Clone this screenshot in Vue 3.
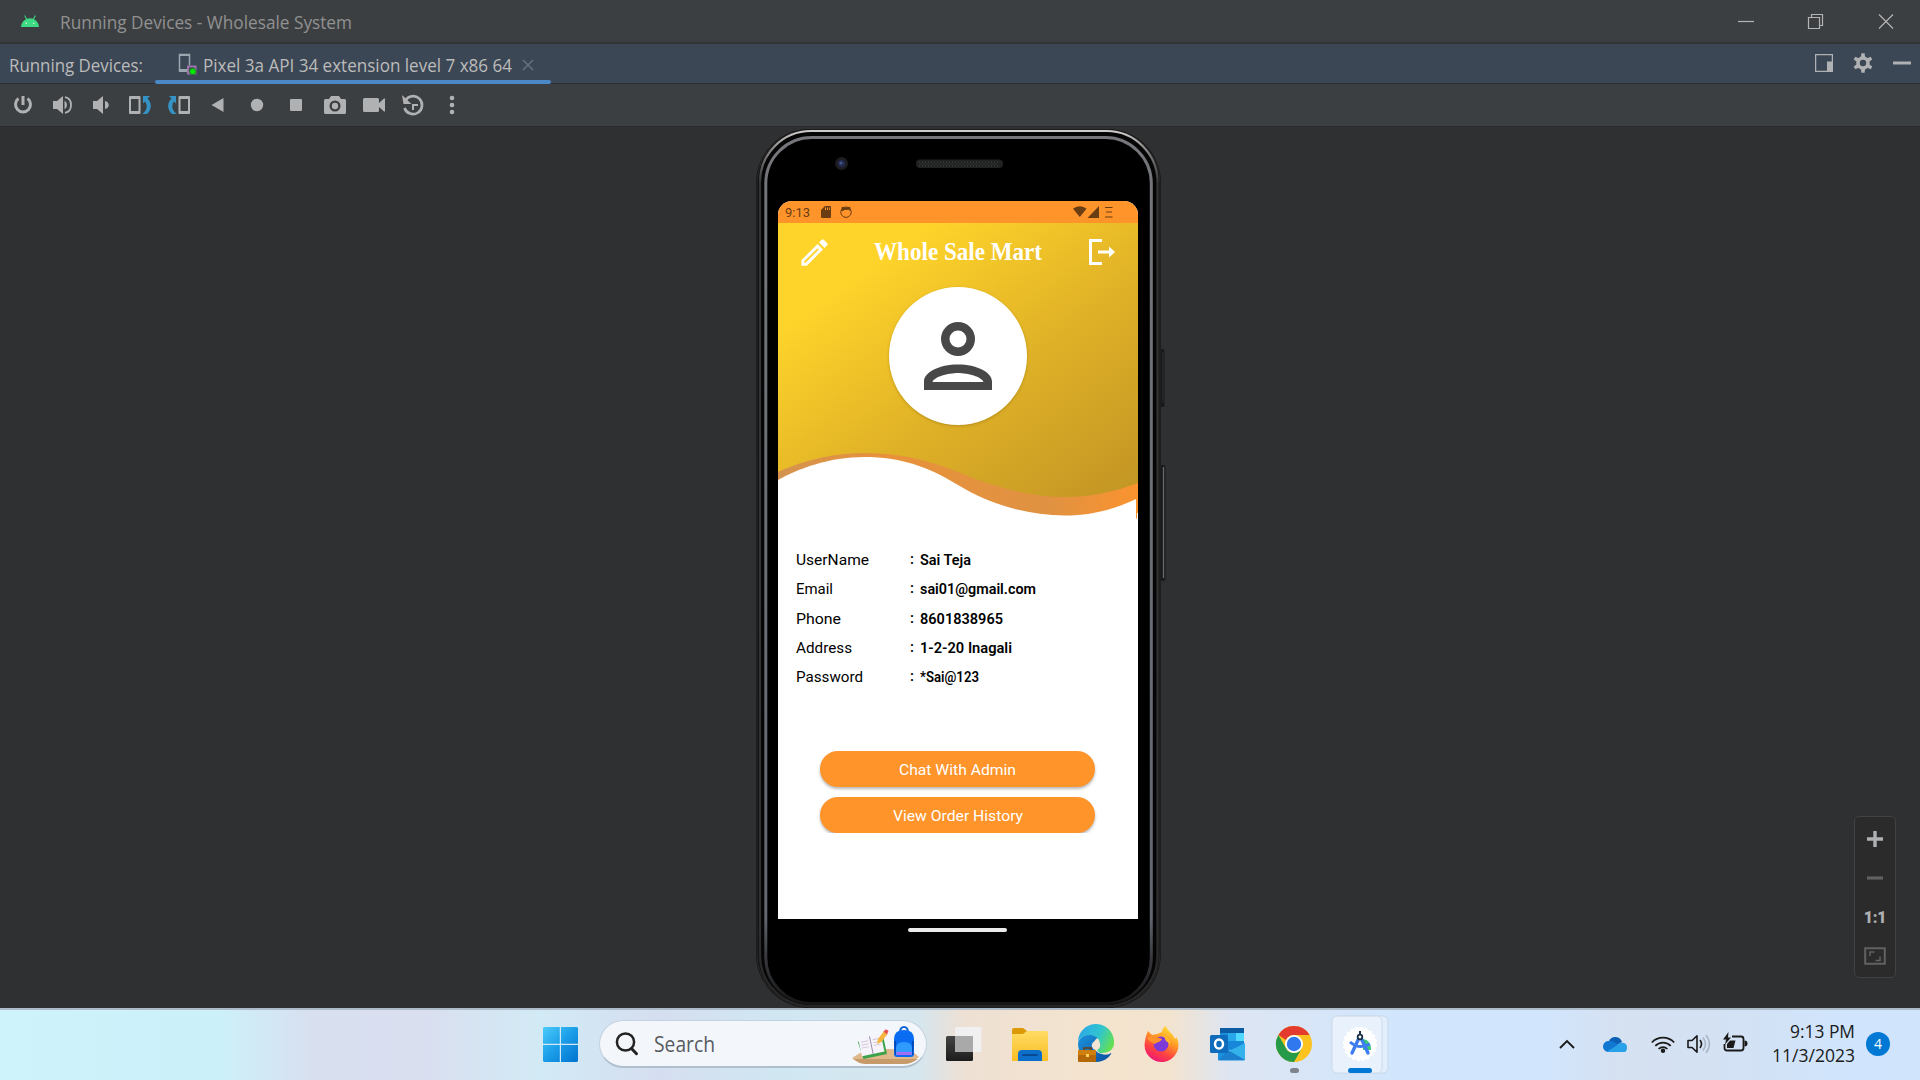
<script setup>
import { h } from 'vue'

// Single-line text drawn to an exact advance width.
const Label = (props) =>
  h('svg', { class: 'label', width: props.w, height: props.size }, [
    h(
      'text',
      {
        x: 0,
        y: props.size * 0.85,
        'font-size': props.size,
        textLength: props.w,
        lengthAdjust: 'spacingAndGlyphs',
        fill: 'currentColor',
      },
      props.text,
    ),
  ])
Label.props = ['text', 'w', 'size']

const rows = [
  { label: 'UserName', lw: 73, value: 'Sai Teja', vw: 51 },
  { label: 'Email', lw: 37, value: 'sai01@gmail.com', vw: 116 },
  { label: 'Phone', lw: 45, value: '8601838965', vw: 83 },
  { label: 'Address', lw: 56, value: '1-2-20 Inagali', vw: 92 },
  { label: 'Password', lw: 67, value: '*Sai@123', vw: 59 },
]
const actions = [
  { text: 'Chat With Admin', w: 117 },
  { text: 'View Order History', w: 130 },
]
</script>

<template>
  <div class="desktop">
    <header class="titlebar">
      <svg class="android" width="18" height="12" viewBox="0 0 18 12">
        <path d="M0 12C.3 8.200 2.200 5.600 5 4.300L3.200.8l.8-.5 2 3.500a9 9 0 0 1 6 0L14 .3l.8.5L13 4.300c2.800 1.300 4.700 3.900 5 7.700z" fill="#3ddc84" />
        <circle cx="5.200" cy="8.300" r=".8" fill="#d8f7e5" /><circle cx="12.800" cy="8.300" r=".8" fill="#d8f7e5" />
      </svg>
      <Label class="win-title" text="Running Devices - Wholesale System" :w="292" :size="18.5" />
      <div class="win-buttons">
        <svg width="18" height="18" viewBox="0 0 18 18"><path d="M1 9.500h16" /></svg>
        <svg width="18" height="18" viewBox="0 0 18 18"><path d="M1.500 5.500h11v11h-11zM4.500 5.500v-3h11v11h-3" /></svg>
        <svg width="18" height="18" viewBox="0 0 18 18"><path d="M2 2.500l14 14M16 2.500l-14 14" /></svg>
      </div>
    </header>

    <nav class="tabs">
      <Label class="tabs-name" text="Running Devices:" :w="134" :size="18.5" />
      <div class="tab">
        <svg class="tab-icon" width="20" height="22" viewBox="0 0 20 22">
          <path d="M9 18H1.500V1.500h10v11" fill="none" stroke="#9aa7b0" stroke-width="1.500" />
          <path d="M1 1h11v2H1zM1 16h8v3H1z" fill="#9aa7b0" />
          <path d="M10 13.500h7.500v7H10z" fill="none" stroke="#9876aa" stroke-width="2" />
          <circle cx="14.800" cy="18.500" r="3.200" fill="#00e800" stroke="#254a2c" stroke-width=".6" />
        </svg>
        <Label text="Pixel 3a API 34 extension level 7 x86 64" :w="309" :size="18.5" />
        <svg class="tab-close" width="12" height="12" viewBox="0 0 12 12"><path d="M1 1l10 10M11 1L1 11" stroke="#6b747e" stroke-width="1.300" /></svg>
      </div>
      <div class="tab-tools">
        <svg width="18" height="18" viewBox="0 0 18 18"><path d="M.6.6h16.800v16.800H.6z" fill="none" stroke="#afb1b3" stroke-width="1.300" /><path d="M12 7.500h6V18h-6z" fill="#afb1b3" /></svg>
        <svg width="20" height="20" viewBox="0 0 20 20">
          <g fill="#afb1b3"><path fill-rule="evenodd" d="M10 3.200a6.800 6.800 0 1 0 0 13.600 6.800 6.800 0 0 0 0-13.600zm0 3.600a3.200 3.200 0 1 1 0 6.400 3.200 3.200 0 0 1 0-6.400z" />
            <path v-for="a in 6" :key="a" d="M7.900 4.500L8.400.2h3.200l.5 4.300z" :transform="`rotate(${a * 60} 10 10)`" /></g>
        </svg>
        <svg width="18" height="18" viewBox="0 0 18 18"><path d="M0 7.500h18v3H0z" fill="#afb1b3" /></svg>
      </div>
    </nav>

    <div class="toolbar">
      <svg viewBox="0 0 24 24"><path d="M7.500 5.500a7.500 7.500 0 1 0 9 0" fill="none" stroke="#afb1b3" stroke-width="3" /><path d="M10.500 3h3v9h-3z" /></svg>
      <svg viewBox="0 0 24 24"><path d="M3 8h4l6-5v18l-6-5H3zM14.500 8c3.300 1 3.300 7 0 8z" /><path d="M15 4.200c8 1.500 8 14 0 15.600" fill="none" stroke="#afb1b3" stroke-width="1.800" /></svg>
      <svg viewBox="0 0 24 24"><path d="M4 8h4l6-5v18l-6-5H4zM16 8c5 1 5 7 0 8z" /></svg>
      <svg viewBox="0 0 24 24"><path fill-rule="evenodd" d="M2 3h9.500a1 1 0 0 1 1 1v16a1 1 0 0 1-1 1H2a1 1 0 0 1-1-1V4a1 1 0 0 1 1-1zm1 3v12h7.500V6z" /><path d="M15 3h7l-2.500 2.400c4.500 4.200 4.500 11-.5 15.600h-5c5-3.500 6-8.500 3-12.600l-2 2z" fill="#3592c4" /></svg>
      <svg viewBox="0 0 24 24"><path fill-rule="evenodd" d="M12.500 3H22a1 1 0 0 1 1 1v16a1 1 0 0 1-1 1h-9.500a1 1 0 0 1-1-1V4a1 1 0 0 1 1-1zm1 3v12H21V6z" /><path d="M9 3H2l2.500 2.400C0 9.600 0 16.400 5 21h5c-5-3.500-6-8.500-3-12.600l2 2z" fill="#3592c4" /></svg>
      <svg viewBox="0 0 24 24"><path d="M5.500 12l12-7v14z" /></svg>
      <svg viewBox="0 0 24 24"><circle cx="12" cy="12" r="6.200" /></svg>
      <svg viewBox="0 0 24 24"><rect x="6" y="6" width="12" height="12" rx="1" /></svg>
      <svg viewBox="0 0 24 24"><path fill-rule="evenodd" d="M8 3h8l2 3h3.500A1.500 1.500 0 0 1 23 7.500v12a1.500 1.500 0 0 1-1.500 1.500h-19A1.500 1.500 0 0 1 1 19.500v-12A1.500 1.500 0 0 1 2.500 6H6zm4 4.500a5.500 5.500 0 1 0 0 11 5.500 5.500 0 0 0 0-11z" /><circle cx="12" cy="13" r="3.200" /></svg>
      <svg viewBox="0 0 24 24"><path d="M3 5h12.500A1.500 1.500 0 0 1 17 6.500V10l5-4.500h1v13h-1L17 14v3.500a1.500 1.500 0 0 1-1.500 1.500h-13A1.500 1.500 0 0 1 1 17.500v-11A1.500 1.500 0 0 1 2.500 5z" /></svg>
      <svg viewBox="0 0 24 24"><path d="M4.300 7.500a9 9 0 1 1-.8 7.500" fill="none" stroke="#afb1b3" stroke-width="2.600" /><path d="M1 2l1.500 9h8z" /><path d="M12 17v-5h5" fill="none" stroke="#afb1b3" stroke-width="2" /></svg>
      <svg viewBox="0 0 24 24"><circle cx="12" cy="5" r="2.300" /><circle cx="12" cy="12" r="2.300" /><circle cx="12" cy="19" r="2.300" /></svg>
    </div>

    <main class="canvas">
      <div class="phone">
        <svg class="shell" width="414" height="880" viewBox="0 0 414 880">
          <defs>
            <linearGradient id="rim" x1="0" y1="0" x2="0" y2="1">
              <stop offset="0" stop-color="#d0cccb" /><stop offset=".02" stop-color="#8a8888" /><stop offset=".06" stop-color="#343434" /><stop offset=".9" stop-color="#303030" /><stop offset="1" stop-color="#262626" />
            </linearGradient>
            <linearGradient id="bezelL" x1="0" y1="0" x2="0" y2="1">
              <stop offset="0" stop-color="#74767b" /><stop offset=".9" stop-color="#626770" /><stop offset=".95" stop-color="#34363a" /><stop offset="1" stop-color="#161617" />
            </linearGradient>
          </defs>
          <rect x="402" y="221" width="6.500" height="58" rx="2" fill="#18191a" /><path d="M407 224v51" stroke="#303132" />
          <rect x="404" y="337" width="5.500" height="116" rx="2" fill="#1a1a1b" /><path d="M407.500 339v111" stroke="#68696b" stroke-width="1.400" />
          <rect x="0" y="1" width="405" height="879" rx="54" fill="#131313" />
          <rect x="1" y="2" width="403" height="877" rx="53" fill="none" stroke="#2a2a2a" />
          <rect x="4" y="3" width="397.500" height="875" rx="51" fill="#050505" stroke="url(#rim)" stroke-width="2.200" />
          <rect x="9.800" y="9.500" width="385.500" height="866" rx="46" fill="#000" stroke="url(#bezelL)" stroke-width="3" />
          <rect x="13" y="12" width="379" height="862" rx="44" fill="#000" />
          <circle cx="85.500" cy="35.500" r="6.500" fill="#1d1d21" /><circle cx="85.500" cy="35.500" r="3.500" fill="#242b51" /><circle cx="85" cy="35" r="1.500" fill="#455585" />
          <rect x="160" y="31.500" width="87" height="8.500" rx="4" fill="#202222" />
          <path d="M163 34h81M164.500 36h78M163 38h81" stroke="#464848" stroke-dasharray="1 2" />
        </svg>

        <section class="screen">
          <div class="status">
            <Label class="clock" text="9:13" :w="25" :size="13" />
            <svg class="sd" width="10" height="12" viewBox="0 0 10 12"><path fill-rule="evenodd" d="M4 0h5a1 1 0 0 1 1 1v10a1 1 0 0 1-1 1H1a1 1 0 0 1-1-1V4zm0 1.500v2.500h1V1.500zm2 0V4h1V1.500zm2 0V4h.8V1.500z" /></svg>
            <svg class="pet" width="12" height="12" viewBox="0 0 12 12"><circle cx="6" cy="6.200" r="5.200" fill="none" stroke="#6b3d12" stroke-width="1" /><path d="M1.800.8L6 1.500l4.200-.7.500 3.600-1.200.3-.5-1-5 .3-1 1.200L1.300 4.500z" /></svg>
            <svg class="signals" width="40" height="12" viewBox="0 0 40 12"><path d="M0 2.800C4-.6 9.500-.6 13.500 2.800L6.800 11zM26 0v12H14.500z" /><path d="M32 1.500h7.500M33 6h6M32 11h7.500" stroke="#6b3d12" stroke-width="1.100" /></svg>
          </div>
          <div class="hero">
            <svg class="wave" width="360" height="297" viewBox="0 0 360 297">
              <defs>
                <linearGradient id="gold" gradientUnits="userSpaceOnUse" x1="49" y1="70" x2="241" y2="344">
                  <stop offset="0" stop-color="#ffd42a" /><stop offset=".5" stop-color="#dfb127" /><stop offset="1" stop-color="#c49624" />
                </linearGradient>
                <linearGradient id="ribbon"><stop offset="0" stop-color="#d4934e" /><stop offset=".3" stop-color="#e8923a" /><stop offset=".75" stop-color="#e09242" /><stop offset="1" stop-color="#fb932f" /></linearGradient>
              </defs>
              <path d="M0 200H360V290H359V295.500H358V276C335 287 312 292.500 287 292.500C245 292.500 208 279 180 262C150 243.500 122 234 87 234C50 234 20 246 0 257Z" fill="url(#ribbon)" />
              <path d="M0 0H360V260C335 269.500 312 274 287 274C250 274 215 263.500 180 249C148 236.500 120 230 87 230C50 230 20 240 0 249Z" fill="url(#gold)" />
            </svg>
            <div class="appbar">
              <svg width="35" height="35" viewBox="0 0 24 24"><path d="M14.060 9.020l.92.92L5.920 19H5v-.92l9.060-9.060M17.660 3c-.25 0-.51.1-.7.290l-1.830 1.830 3.750 3.750 1.830-1.830c.39-.39.39-1.020 0-1.410l-2.340-2.340c-.2-.2-.45-.29-.68-.29zm-3.600 3.190L3 17.250V21h3.750L17.810 9.940l-3.750-3.750z" /></svg>
              <Label class="brand" text="Whole Sale Mart" :w="168" :size="25" />
              <svg class="exit" width="26" height="26" viewBox="0 0 26 26"><path d="M13 1.500H1.500v23H13M9 13h12" fill="none" stroke="#fff" stroke-width="3" /><path d="M20 7.500l6 5.500-6 5.500z" /></svg>
            </div>
            <div class="avatar">
              <svg width="102" height="102" viewBox="0 0 24 24"><path fill-rule="evenodd" d="M12 4a4 4 0 1 0 0 8 4 4 0 0 0 0-8zm0 2a2 2 0 1 1 0 4 2 2 0 0 1 0-4zM12 14c-4.420 0-8 1.790-8 4v2h16v-2c0-2.210-3.580-4-8-4zm0 2c2.300 0 5.600.9 6 2.100H6C6.400 16.900 9.700 16 12 16z" /></svg>
            </div>
          </div>
          <div class="details">
            <div v-for="r in rows" :key="r.label" class="row">
              <div class="key"><Label :text="r.label" :w="r.lw" :size="14.5" /></div>
              <span class="colon">:</span>
              <Label class="value" :text="r.value" :w="r.vw" :size="14.5" />
            </div>
          </div>
          <div class="actions">
            <button v-for="a in actions" :key="a.text"><Label :text="a.text" :w="a.w" :size="15" /></button>
          </div>
        </section>
        <div class="home"></div>
      </div>

      <aside class="zoom">
        <svg width="22" height="22" viewBox="0 0 22 22"><path d="M3 11h16M11 3v16" stroke="#afb1b3" stroke-width="3.400" /></svg>
        <svg width="22" height="22" viewBox="0 0 22 22"><path d="M3 11h16" stroke="#606162" stroke-width="3.200" /></svg>
        <span>1:1</span>
        <svg width="22" height="22" viewBox="0 0 22 22"><path d="M1.200 3.200h19.600v15.600H1.200z" fill="none" stroke="#606162" stroke-width="2" /><path d="M6 11V7h4.500M16 11.500v4h-4.500" fill="none" stroke="#606162" stroke-width="1.500" /></svg>
      </aside>
    </main>

    <footer class="taskbar">
      <svg class="start" width="35" height="35" viewBox="0 0 35 35">
        <defs><linearGradient id="win" x1="0" y1="0" x2="1" y2="1" gradientUnits="objectBoundingBox"><stop offset="0" stop-color="#4ccbfb" /><stop offset=".5" stop-color="#1a9de8" /><stop offset="1" stop-color="#0073cf" /></linearGradient></defs>
        <path d="M1 0H16.800V16.800H0V1zM18 0H34L35 1V16.800H18zM0 18H16.800V35H1L0 34zM18 18H35V34L34 35H18z" fill="url(#win)" />
      </svg>
      <div class="search">
        <svg class="lens" width="24" height="24" viewBox="0 0 24 24"><circle cx="10.500" cy="10" r="8.600" fill="none" stroke="#222" stroke-width="2.500" /><path d="M16.500 16.500l5 5.200" stroke="#222" stroke-width="3" stroke-linecap="round" /></svg>
        <Label text="Search" :w="61" :size="21" />
        <svg class="art" width="68" height="38" viewBox="0 0 68 38">
          <path d="M0 32L8 27C22 22 45 22 60 25L67 31 60 36Q56 38 48 38H18Q10 38 6 36z" fill="#dfb98c" /><path d="M1 33h65l-6 3.500q-4 1.500-10 1.500H17Q9 38 6 36z" fill="#c79a69" />
          <g transform="rotate(-12 20 20)"><path d="M7 13h26v18H9z" fill="#3ea24b" /><path d="M8 10h23v18H8z" fill="#f7f3fb" /><path d="M19.500 10v18" stroke="#9b90ad" /><path d="M10 14h7M10 17h7M10 20h7M22 14h7M22 17h7M22 20h7" stroke="#cfc8da" /></g>
          <path d="M25 18l1-5 6-8 3.500 3-6 8z" fill="#f5b53f" /><path d="M31.500 5.500l2-2q1.500-.5 3 1.500L35 8.500z" fill="#e8524e" />
          <path d="M48 7Q48 1 52 1t4 6" fill="none" stroke="#1464d8" stroke-width="2" />
          <path d="M42 13Q42 4 52 4t10 9v15q0 3-3 3H45q-3 0-3-3z" fill="#0a6cf0" /><path d="M44 22q0-6 8-6t8 6v7H44z" fill="#2f9bff" /><path d="M44 26h16l-1 3H45z" fill="#a86cf0" /><path d="M42 15h2v14H43zM62 15h-2v14H61z" fill="#0647b5" />
        </svg>
      </div>

      <div class="apps">
        <svg viewBox="0 0 66 72">
          <defs><linearGradient id="tv" x1="0" y1="0" x2="0" y2="1"><stop offset="0" stop-color="#444" /><stop offset="1" stop-color="#1d1d1d" /></linearGradient></defs>
          <rect x="16" y="28" width="27" height="25" rx="1.500" fill="url(#tv)" /><rect x="25" y="19" width="26.500" height="25" rx="1.500" fill="#f0f0f1" /><path d="M25 28h18v16H26.500Q25 44 25 42.500z" fill="#a9a9aa" />
        </svg>
        <svg viewBox="0 0 66 72">
          <defs><linearGradient id="fold" x1="0" y1="0" x2="0" y2="1"><stop offset="0" stop-color="#ffdb63" /><stop offset="1" stop-color="#f9bd25" /></linearGradient></defs>
          <path d="M16 22q0-2 2-2h9l4 3h18v8H16z" fill="#dd9a08" /><path d="M16 26h11l4-3h19q2 0 2 2v28H16z" fill="url(#fold)" /><path d="M22 53V46q0-4 4-4h16q4 0 4 4v7z" fill="#0c6fc9" /><path d="M27 47h14" stroke="#0a4a93" stroke-width="1.800" stroke-linecap="round" />
        </svg>
        <svg viewBox="0 0 66 72">
          <defs>
            <linearGradient id="edgeTop" x1="0" y1=".2" x2="1" y2=".6"><stop offset="0" stop-color="#2ba6e8" /><stop offset=".55" stop-color="#30c5cf" /><stop offset="1" stop-color="#65e050" /></linearGradient>
            <linearGradient id="edgeLow" x1="0" y1="0" x2="1" y2="1"><stop offset="0" stop-color="#1a94dd" /><stop offset="1" stop-color="#0c4d9f" /></linearGradient>
          </defs>
          <path d="M16 36a18 18 0 0 0 24 17c5-1.500 8-5 9.500-8-6 3-17 1-18-7-.5-5 3-8 5-8C30 24 17 26 16 36z" fill="url(#edgeLow)" />
          <path d="M16 35a18 18 0 0 1 36-2c1 9-6 12-12 12-4 0-6-2-4-4 4-6 1-13-7-14-7-.5-12 3-13 8z" fill="url(#edgeTop)" />
          <circle cx="34" cy="37.500" r="4.200" fill="#f3e5d3" /><path d="M32 39q2 6 9 7 6 .5 9-1-8 3.500-13-.5z" fill="#f3e5d3" />
          <rect x="16" y="42" width="18" height="12" rx="1" fill="#b5680a" /><path d="M16 42h18v5H16z" fill="#cf7f0d" /><path d="M22 42v-2h7v2" fill="none" stroke="#6c3f0c" stroke-width="1.500" /><path d="M24 46h3v3h-3z" fill="#ffd257" />
        </svg>
        <svg viewBox="0 0 66 72">
          <defs>
            <linearGradient id="fox" x1=".8" y1="0" x2=".3" y2="1"><stop offset="0" stop-color="#ffe83b" /><stop offset=".4" stop-color="#ff9a26" /><stop offset=".7" stop-color="#ff4440" /><stop offset="1" stop-color="#ee1578" /></linearGradient>
          </defs>
          <path d="M20 23l4 4 5-1 5-2c0-3 2-5 4-6 1 5 7 7 9 13l1.500-2A17 17 0 1 1 17 33c.5-4 1.500-7 3-10z" fill="url(#fox)" />
          <circle cx="33" cy="36" r="7.500" fill="#7c3bd8" /><path d="M19 30c4-3 8-2 12 0l3 1c-1 3-5 3-7 5-3-1-6-3-8-6z" fill="#ff922c" /><path d="M33 27c6 0 10 4 9 10-2-4-5-3-5-7z" fill="#ffb72e" />
        </svg>
        <svg viewBox="0 0 66 72">
          <rect x="26" y="20" width="24" height="22" fill="#1b8ddd" /><path d="M26 20h24v5H26z" fill="#0b5ca5" /><path d="M34 25h8v8h-8z" fill="#28a8ea" /><path d="M42 25h8v8h-8z" fill="#50d9ff" /><path d="M34 33h16v8H34z" fill="#1687d9" /><path d="M24 36l14 8 13-8v15q0 1.500-1.500 1.500H25q-1 0-1-1z" fill="#1a91df" /><path d="M51 35L33 44l17 8q1 0 1-1z" fill="#33b2ec" /><path d="M34 42L51 52H25z" fill="#1c80ce" />
          <rect x="16" y="27" width="18" height="18" rx="1.500" fill="#0f6cbd" /><ellipse cx="25" cy="36" rx="4" ry="4.600" fill="none" stroke="#fff" stroke-width="2.500" />
        </svg>
        <svg viewBox="0 0 66 72">
          <circle cx="34" cy="36" r="18" fill="#fcc31e" /><path d="M18.400 27A18 18 0 0 1 49.600 27H34a9 9 0 0 0-8 5z" fill="#e33b2e" /><path d="M18.400 27A18 18 0 0 0 34 54l7.800-13.500a9 9 0 0 1-15.600 0z" fill="#259b4a" />
          <circle cx="34" cy="36" r="9" fill="#fff" /><circle cx="34" cy="36" r="7.200" fill="#2f78ee" /><rect x="30" y="60" width="9" height="5" rx="2.500" fill="#7e858c" />
        </svg>
        <svg viewBox="0 0 66 72">
          <rect x="12" y="8" width="50" height="57" rx="5" fill="#e2eefb" stroke="#c8d8ea" /><rect x="6" y="8" width="50" height="57" rx="5" fill="#e9f1fc" stroke="#cbdaeb" />
          <circle cx="34" cy="36" r="16" fill="#fff" stroke="#fff" stroke-width="2.500" stroke-dasharray="3 2" /><path d="M37 31q8 1 8 11h-8z" fill="#38c977" /><path d="M24 34q9 8 20 2" fill="none" stroke="#3f7cf0" stroke-width="3" /><path d="M33 30L26 45M35 30l7 15" stroke="#3f7cf0" stroke-width="3.400" stroke-linecap="round" /><circle cx="34" cy="29" r="2.300" fill="#fff" stroke="#173042" stroke-width="1.800" /><path d="M34 23v4" stroke="#173042" stroke-width="2" />
          <rect x="22" y="60" width="24" height="5" rx="2.500" fill="#0078d4" />
        </svg>
      </div>

      <div class="tray">
        <svg width="16" height="10" viewBox="0 0 16 10"><path d="M1 9l7-7 7 7" fill="none" stroke="#1b1b1b" stroke-width="1.900" /></svg>
        <svg class="cloud" width="24" height="16" viewBox="0 0 24 16"><path d="M6 5A7 7 0 0 1 19 6L12 10z" fill="#0b5fb5" /><path d="M5 16A5.500 5.500 0 0 1 6 5q3-.5 5 1l9 6-3 4z" fill="#1177d1" /><path d="M4 15.500L13 10l4-3q7-1 7 4.500T19 16H6z" fill="#28a1e8" /></svg>
        <svg class="wifi" width="24" height="17" viewBox="0 0 24 17"><g fill="none" stroke="#1b1b1b" stroke-width="1.700"><path d="M.8 6.500a15.500 15.500 0 0 1 22.400 0M4.300 9.800a10.700 10.700 0 0 1 15.400 0M7.600 13a6.300 6.300 0 0 1 8.800 0" /></g><circle cx="12" cy="14.800" r="2.200" fill="#1b1b1b" /></svg>
        <svg class="vol" width="24" height="20" viewBox="0 0 24 20"><g fill="none" stroke-width="1.600"><path d="M1 6.500h4L10 1.800v16.400L5 13.500H1z" stroke="#1b1b1b" stroke-linejoin="round" /><path d="M13 6q3 4 0 8" stroke="#1b1b1b" /><path d="M16 3.500q5 6.500 0 13M19 1q7 9 0 18" stroke="#a9b5c5" /></g></svg>
        <svg class="bat" width="25" height="20" viewBox="0 0 25 20"><path d="M9 4.500h9q2.500 0 2.500 2.500v9q0 2.500-2.500 2.500H4Q1.500 18.500 1.500 16V12" fill="none" stroke="#1b1b1b" stroke-width="1.800" /><path d="M4 16V12l3-3.500h5.500L10.500 16zM21.500 8.500q3 0 3 3t-3 3zM5.500 0L0 7.500h3L2 12.500 8 5.500H5z" fill="#1b1b1b" /></svg>
        <div class="time">
          <Label text="9:13 PM" :w="65" :size="17.500" />
          <Label text="11/3/2023" :w="83" :size="17.500" />
        </div>
        <span class="badge">4</span>
      </div>
    </footer>
  </div>
</template>

<style>
body { margin: 0; overflow: hidden; }
</style>

<style scoped>
.desktop { width: 1920px; height: 1080px; display: flex; flex-direction: column; background: #2f3032; color: #bbb; font-family: "Open Sans", "Noto Sans", sans-serif; overflow: hidden; }
svg { display: block; flex: none; }
.label { overflow: visible; display: block; flex: none; }
.titlebar { height: 42px; display: flex; align-items: center; background: #3c3f41; border-bottom: 2px solid #323334; box-sizing: content-box; }
.android { margin-left: 21px; }
.win-title { margin: 3px 0 0 21px; color: #919191; }
.win-buttons { display: flex; gap: 52px; margin-left: auto; padding-right: 25.500px; }
.win-buttons svg { fill: none; stroke: #b4b4b4; stroke-width: 1.200; }
.tabs { height: 39px; display: flex; align-items: center; background: #3c4755; border-bottom: 1px solid #2d3032; }
.tabs-name { margin: 3px 0 0 9px; }
.tab { position: relative; display: flex; align-items: center; width: 396px; height: 40px; margin-left: 12px; align-self: flex-start; }
.tab::after { content: ""; position: absolute; left: 0; right: 0; bottom: 0; height: 4px; border-radius: 2px; background: #4a88c7; }
.tab-icon { margin-left: 23px; }
.tab .label { margin: 2px 0 0 5px; }
.tab-close { margin: 2px 0 0 10px; }
.tab-tools { display: flex; align-items: center; gap: 20px; margin: -2px 0 0 auto; padding-right: 9px; }
.toolbar { height: 42px; display: flex; align-items: center; gap: 15px; padding-left: 11px; background: #3c3f41; }
.toolbar svg { width: 24px; height: 24px; fill: #afb1b3; }
.canvas { position: relative; height: 882px; display: flex; padding-left: 756px; background: #2f3032; border-top: 1px solid #2b2929; box-sizing: border-box; }
.phone { position: relative; width: 414px; height: 880px; margin-top: 1px; }
.shell { position: absolute; inset: 0; }
.screen { position: relative; width: 360px; height: 718px; margin: 73px 0 0 22px; background: #fff; border-radius: 14px 14px 0 0; overflow: hidden; font-family: Roboto, sans-serif; color: #000; }
.status { height: 22px; display: flex; align-items: center; background: #ff942a; color: #6b3d12; fill: #6b3d12; }
.clock { margin-left: 7px; }
.sd { margin-left: 11px; }
.pet { margin-left: 9px; }
.signals { margin-left: auto; margin-right: 25.500px; }
.hero { position: relative; height: 327px; }
.wave { position: absolute; inset: 0; }
.appbar { position: relative; display: flex; align-items: center; height: 58px; padding-left: 18.500px; fill: #fff; }
.brand { margin: -2px 0 0 42px; font-family: "Liberation Serif", serif; font-weight: 700; color: #fff; }
.exit { margin-left: 47.500px; }
.avatar { position: relative; display: flex; align-items: center; justify-content: center; width: 138px; height: 138px; margin: 6px auto 0; border-radius: 50%; background: #fff; fill: #484848; box-shadow: 0 1px 3px rgba(110, 80, 0, .35); }
.details { padding-left: 18px; height: 202px; margin-top: -4.500px; }
.row { display: flex; align-items: center; height: 29.330px; }
.key { width: 114px; }
.colon { width: 10px; margin-top: -2px; font-size: 15px; font-weight: 500; }
.value { font-weight: 600; }
.actions { display: flex; flex-direction: column; gap: 10px; padding-left: 42px; margin-top: 3.500px; overflow: hidden; }
.actions button { width: 275px; height: 36px; display: flex; align-items: center; justify-content: center; padding: 0; border: 0; border-radius: 18px; background: #ff942a; color: #fff; font-family: Roboto, sans-serif; box-shadow: 0 2px 3px rgba(0, 0, 0, .28); }
.home { position: relative; width: 99px; height: 4px; margin: 9px 0 0 152px; border-radius: 2px; background: #ebebeb; }
.zoom { position: absolute; right: 24px; bottom: 30px; width: 42px; height: 162px; box-sizing: border-box; display: flex; flex-direction: column; align-items: center; gap: 17px; padding-top: 11px; background: #2b2b2b; border: 1px solid #414243; border-radius: 5px; }
.zoom span { height: 22px; font: 900 16px/23px Roboto, sans-serif; letter-spacing: -.3px; color: #afb1b3; }
.taskbar { height: 72px; box-sizing: border-box; display: flex; align-items: center; padding-bottom: 2px; border-top: 2px solid #adbac8; background: linear-gradient(90deg, #cff3fb 0, #ccf0f9 220px, #d8e0f0 310px, #dadff0 420px, #d2eaf5 540px, #d5def0 660px, #d0e7f2 780px, #d6e6ee 920px, #eee0d3 965px, #f4e4ce 1110px, #f2e3cf 1170px, #dde5f2 1230px, #d1e6fd 1400px, #d1e5fc 1550px, #d6e1f1 1620px, #d3e2f5 1750px, #d0e5fd 1850px, #d0e5fc 1920px); }
.start { margin-left: 543px; }
.search { width: 328px; height: 48px; box-sizing: border-box; margin-left: 21px; display: flex; align-items: center; border: 1px solid #c4d1df; border-bottom: 2px solid #b0bfce; border-radius: 24px; background: #f3f7fc; color: #585b5f; }
.lens { margin-left: 15px; }
.search .label { margin: 2px 0 0 15px; }
.art { margin: 2px 0 0 auto; padding-right: 6px; }
.apps { display: flex; margin: 0 0 0 3px; }
.apps svg { width: 66px; height: 72px; }
.tray { display: flex; align-items: center; margin-left: 167px; color: #1b1b1b; }
.cloud { margin-left: 28px; }
.wifi { margin-left: 24px; }
.vol { margin-left: 12px; }
.bat { margin: -4px 0 0 12px; }
.time { width: 107px; display: flex; flex-direction: column; align-items: flex-end; gap: 6.500px; }
.badge { width: 24px; height: 24px; margin-left: 11px; border-radius: 50%; background: #0078d4; color: #fff; font-size: 14px; line-height: 24px; text-align: center; }
</style>
